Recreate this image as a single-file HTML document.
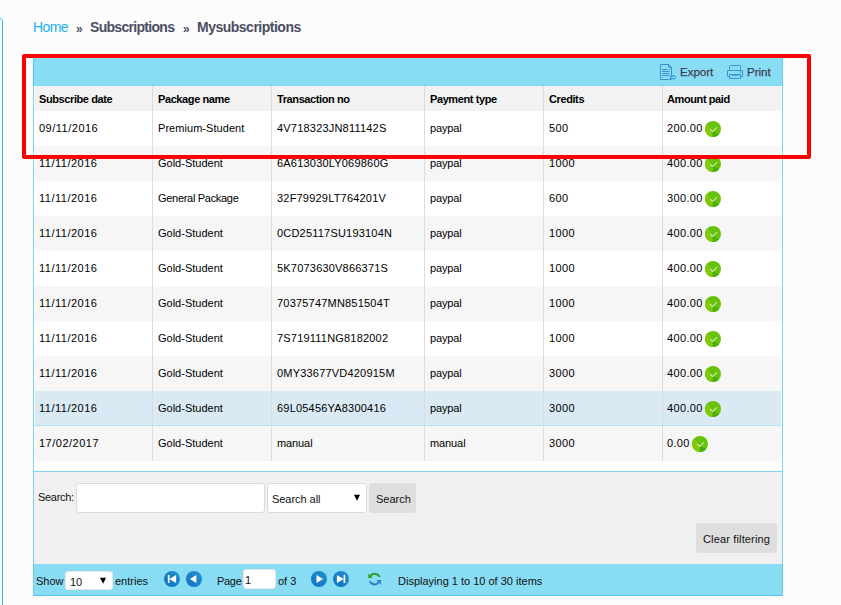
<!DOCTYPE html>
<html><head><meta charset="utf-8">
<style>
*{margin:0;padding:0;box-sizing:border-box}
html,body{width:841px;height:605px;overflow:hidden;background:#fcfcfc;font-family:"Liberation Sans",sans-serif;color:#222}
.a{position:absolute}
#side{left:-10px;top:17px;width:13px;height:620px;border:1px solid #26bdee;border-left:none;border-top-right-radius:5px}
.bc{position:absolute;top:19px;font-size:14px;white-space:nowrap;height:16px;line-height:16px;color:#4b4e63;font-weight:bold}
.cell{position:absolute;white-space:nowrap;overflow:visible}
.t{position:absolute;left:5px;top:-1px;bottom:1px;display:flex;align-items:center;font-size:11px;color:#000}
.hb{letter-spacing:-0.4px}
.hb{font-weight:bold}
.chk{margin-left:2px;margin-top:2px}
.lbl{position:absolute;font-size:11px;white-space:nowrap;line-height:14px;color:#111}
.inp{position:absolute;background:#fff;border:1px solid #dadada;border-radius:3px}
.btn{position:absolute;background:#dedede;border-radius:3px}
</style></head><body>
<div class="a" id="side"></div>
<div class="bc" style="left:33px;color:#1fb1ea;font-weight:normal;letter-spacing:-0.6px">Home</div>
<div class="bc" style="left:76px;top:21px;font-size:12px">»</div>
<div class="bc" style="left:90px;letter-spacing:-0.7px">Subscriptions</div>
<div class="bc" style="left:183px;top:21px;font-size:12px">»</div>
<div class="bc" style="left:197px;letter-spacing:-0.5px">Mysubscriptions</div>

<div class="a" style="left:33px;top:58px;width:750px;height:538px;border:1px solid #7fd4ef;border-top:none;background:#fff"></div>
<div class="a" style="left:33px;top:58px;width:750px;height:28px;background:#88dcf3;border-left:1px solid #52c6ee;border-right:1px solid #6ccfef;border-bottom:1px solid #80d8f1"></div>
<svg class="a" style="left:655px;top:60px" width="26" height="24" viewBox="0 0 26 24">
 <g fill="none" stroke="#3a92d0" stroke-width="1">
  <path d="M5.5 4.5 H13.5 L16.5 7.5 V19.5 H5.5 Z"/>
  <path d="M13.5 4.5 V6 A1.5 1.5 0 0 0 15 7.5 H16.5"/>
  <path d="M7 9.5 H12.5 M7 11.5 H14.5 M7 13.5 H14.5 M7 15.5 H14.5"/>
  <path d="M14 9.5 H15"/>
  <path d="M15.5 16.2 H18.2 V15 L21 17.3 L18.2 19.6 V18.4 H15.5 Z" fill="#88dcf3"/>
 </g>
</svg>
<div class="lbl" style="left:680px;top:65px;color:#3a3f55;font-size:11.5px;-webkit-text-stroke:0.25px #3a3f55">Export</div>
<svg class="a" style="left:723px;top:60px" width="26" height="24" viewBox="0 0 26 24">
 <g fill="none" stroke="#3a92d0" stroke-width="1">
  <path d="M6.5 9.5 V6.5 Q6.5 5.5 7.5 5.5 H16.5 Q17.5 5.5 17.5 6.5 V9.5"/>
  <path d="M6.5 16.5 H5 Q4.5 16.5 4.5 16 V11 Q4.5 10.5 5 10.5 H19 Q19.5 10.5 19.5 11 V16 Q19.5 16.5 19 16.5 H17.5"/>
  <path d="M6.5 14.5 V18 Q6.5 18.5 7 18.5 H17 Q17.5 18.5 17.5 18 V14.5"/>
  <path d="M6.5 14.5 H17.5"/>
  <path d="M8.5 15.2 H15.5"/>
 </g>
 <circle cx="17.3" cy="12" r=".8" fill="#3a92d0"/>
</svg>
<div class="lbl" style="left:747px;top:65px;color:#3a3f55;font-size:11.5px;-webkit-text-stroke:0.25px #3a3f55">Print</div>

<div class="a" style="left:35px;top:86px;width:746px;height:25px;background:#f2f2f2"></div>
<div class="cell" style="left:35px;top:86px;width:117px;height:25px;"><span class="t hb" style="left:4px;top:0;bottom:0">Subscribe date</span></div>
<div class="cell" style="left:152px;top:86px;width:119px;height:25px;border-left:1px solid #dcdcdc;"><span class="t hb" style="left:5px;top:0;bottom:0">Package name</span></div>
<div class="cell" style="left:271px;top:86px;width:153px;height:25px;border-left:1px solid #dcdcdc;"><span class="t hb" style="left:5px;top:0;bottom:0">Transaction no</span></div>
<div class="cell" style="left:424px;top:86px;width:119px;height:25px;border-left:1px solid #dcdcdc;"><span class="t hb" style="left:5px;top:0;bottom:0">Payment type</span></div>
<div class="cell" style="left:543px;top:86px;width:119px;height:25px;border-left:1px solid #dcdcdc;"><span class="t hb" style="left:5px;top:0;bottom:0">Credits</span></div>
<div class="cell" style="left:662px;top:86px;width:119px;height:25px;border-left:1px solid #dcdcdc;"><span class="t hb" style="left:4px;top:0;bottom:0">Amount paid</span></div>
<div class="a" style="left:35px;top:111px;width:746px;height:35px;background:#ffffff"></div>
<div class="cell" style="left:35px;top:111px;width:117px;height:35px;"><span class="t " style="left:4px;letter-spacing:0.5px">09/11/2016</span></div>
<div class="cell" style="left:152px;top:111px;width:119px;height:35px;border-left:1px solid #dcdcdc;"><span class="t " style="left:5px;letter-spacing:0.05px">Premium-Student</span></div>
<div class="cell" style="left:271px;top:111px;width:153px;height:35px;border-left:1px solid #dcdcdc;"><span class="t " style="left:5px;letter-spacing:0.2px">4V718323JN811142S</span></div>
<div class="cell" style="left:424px;top:111px;width:119px;height:35px;border-left:1px solid #dcdcdc;"><span class="t " style="left:5px;letter-spacing:-0.15px">paypal</span></div>
<div class="cell" style="left:543px;top:111px;width:119px;height:35px;border-left:1px solid #dcdcdc;"><span class="t " style="left:5px;letter-spacing:0.4px">500</span></div>
<div class="cell" style="left:662px;top:111px;width:119px;height:35px;border-left:1px solid #dcdcdc;"><span class="t " style="left:4px;letter-spacing:0.35px">200.00<svg class="chk" width="16" height="16" viewBox="0 0 16 16"><defs><clipPath id="cc0"><circle cx="8" cy="8" r="8"/></clipPath></defs><g clip-path="url(#cc0)"><rect width="16" height="16" fill="#67c20b"/><path d="M7.6 10 L-2.6 -4.4 L-5 -4.4 L-5 20 L7.85 20 Z" fill="#82c90c"/><path d="M7.6 10 L7.85 20 L20 20 L20 16 Z" fill="#46b00c"/></g><path d="M5.2 8.2 L7.6 10.4 L12.2 6.2" fill="none" stroke="#fff" stroke-width="1.1" opacity=".65"/></svg></span></div>
<div class="a" style="left:35px;top:146px;width:746px;height:35px;background:#f6f6f6"></div>
<div class="cell" style="left:35px;top:146px;width:117px;height:35px;"><span class="t " style="left:4px;letter-spacing:0.5px">11/11/2016</span></div>
<div class="cell" style="left:152px;top:146px;width:119px;height:35px;border-left:1px solid #dcdcdc;"><span class="t " style="left:5px;letter-spacing:0px">Gold-Student</span></div>
<div class="cell" style="left:271px;top:146px;width:153px;height:35px;border-left:1px solid #dcdcdc;"><span class="t " style="left:5px;letter-spacing:0.2px">6A613030LY069860G</span></div>
<div class="cell" style="left:424px;top:146px;width:119px;height:35px;border-left:1px solid #dcdcdc;"><span class="t " style="left:5px;letter-spacing:-0.15px">paypal</span></div>
<div class="cell" style="left:543px;top:146px;width:119px;height:35px;border-left:1px solid #dcdcdc;"><span class="t " style="left:5px;letter-spacing:0.4px">1000</span></div>
<div class="cell" style="left:662px;top:146px;width:119px;height:35px;border-left:1px solid #dcdcdc;"><span class="t " style="left:4px;letter-spacing:0.35px">400.00<svg class="chk" width="16" height="16" viewBox="0 0 16 16"><defs><clipPath id="cc1"><circle cx="8" cy="8" r="8"/></clipPath></defs><g clip-path="url(#cc1)"><rect width="16" height="16" fill="#67c20b"/><path d="M7.6 10 L-2.6 -4.4 L-5 -4.4 L-5 20 L7.85 20 Z" fill="#82c90c"/><path d="M7.6 10 L7.85 20 L20 20 L20 16 Z" fill="#46b00c"/></g><path d="M5.2 8.2 L7.6 10.4 L12.2 6.2" fill="none" stroke="#fff" stroke-width="1.1" opacity=".65"/></svg></span></div>
<div class="a" style="left:35px;top:181px;width:746px;height:35px;background:#ffffff"></div>
<div class="cell" style="left:35px;top:181px;width:117px;height:35px;"><span class="t " style="left:4px;letter-spacing:0.5px">11/11/2016</span></div>
<div class="cell" style="left:152px;top:181px;width:119px;height:35px;border-left:1px solid #dcdcdc;"><span class="t " style="left:5px;letter-spacing:-0.3px">General Package</span></div>
<div class="cell" style="left:271px;top:181px;width:153px;height:35px;border-left:1px solid #dcdcdc;"><span class="t " style="left:5px;letter-spacing:0.2px">32F79929LT764201V</span></div>
<div class="cell" style="left:424px;top:181px;width:119px;height:35px;border-left:1px solid #dcdcdc;"><span class="t " style="left:5px;letter-spacing:-0.15px">paypal</span></div>
<div class="cell" style="left:543px;top:181px;width:119px;height:35px;border-left:1px solid #dcdcdc;"><span class="t " style="left:5px;letter-spacing:0.4px">600</span></div>
<div class="cell" style="left:662px;top:181px;width:119px;height:35px;border-left:1px solid #dcdcdc;"><span class="t " style="left:4px;letter-spacing:0.35px">300.00<svg class="chk" width="16" height="16" viewBox="0 0 16 16"><defs><clipPath id="cc2"><circle cx="8" cy="8" r="8"/></clipPath></defs><g clip-path="url(#cc2)"><rect width="16" height="16" fill="#67c20b"/><path d="M7.6 10 L-2.6 -4.4 L-5 -4.4 L-5 20 L7.85 20 Z" fill="#82c90c"/><path d="M7.6 10 L7.85 20 L20 20 L20 16 Z" fill="#46b00c"/></g><path d="M5.2 8.2 L7.6 10.4 L12.2 6.2" fill="none" stroke="#fff" stroke-width="1.1" opacity=".65"/></svg></span></div>
<div class="a" style="left:35px;top:216px;width:746px;height:35px;background:#f6f6f6"></div>
<div class="cell" style="left:35px;top:216px;width:117px;height:35px;"><span class="t " style="left:4px;letter-spacing:0.5px">11/11/2016</span></div>
<div class="cell" style="left:152px;top:216px;width:119px;height:35px;border-left:1px solid #dcdcdc;"><span class="t " style="left:5px;letter-spacing:0px">Gold-Student</span></div>
<div class="cell" style="left:271px;top:216px;width:153px;height:35px;border-left:1px solid #dcdcdc;"><span class="t " style="left:5px;letter-spacing:0.2px">0CD25117SU193104N</span></div>
<div class="cell" style="left:424px;top:216px;width:119px;height:35px;border-left:1px solid #dcdcdc;"><span class="t " style="left:5px;letter-spacing:-0.15px">paypal</span></div>
<div class="cell" style="left:543px;top:216px;width:119px;height:35px;border-left:1px solid #dcdcdc;"><span class="t " style="left:5px;letter-spacing:0.4px">1000</span></div>
<div class="cell" style="left:662px;top:216px;width:119px;height:35px;border-left:1px solid #dcdcdc;"><span class="t " style="left:4px;letter-spacing:0.35px">400.00<svg class="chk" width="16" height="16" viewBox="0 0 16 16"><defs><clipPath id="cc3"><circle cx="8" cy="8" r="8"/></clipPath></defs><g clip-path="url(#cc3)"><rect width="16" height="16" fill="#67c20b"/><path d="M7.6 10 L-2.6 -4.4 L-5 -4.4 L-5 20 L7.85 20 Z" fill="#82c90c"/><path d="M7.6 10 L7.85 20 L20 20 L20 16 Z" fill="#46b00c"/></g><path d="M5.2 8.2 L7.6 10.4 L12.2 6.2" fill="none" stroke="#fff" stroke-width="1.1" opacity=".65"/></svg></span></div>
<div class="a" style="left:35px;top:251px;width:746px;height:35px;background:#ffffff"></div>
<div class="cell" style="left:35px;top:251px;width:117px;height:35px;"><span class="t " style="left:4px;letter-spacing:0.5px">11/11/2016</span></div>
<div class="cell" style="left:152px;top:251px;width:119px;height:35px;border-left:1px solid #dcdcdc;"><span class="t " style="left:5px;letter-spacing:0px">Gold-Student</span></div>
<div class="cell" style="left:271px;top:251px;width:153px;height:35px;border-left:1px solid #dcdcdc;"><span class="t " style="left:5px;letter-spacing:0.2px">5K7073630V866371S</span></div>
<div class="cell" style="left:424px;top:251px;width:119px;height:35px;border-left:1px solid #dcdcdc;"><span class="t " style="left:5px;letter-spacing:-0.15px">paypal</span></div>
<div class="cell" style="left:543px;top:251px;width:119px;height:35px;border-left:1px solid #dcdcdc;"><span class="t " style="left:5px;letter-spacing:0.4px">1000</span></div>
<div class="cell" style="left:662px;top:251px;width:119px;height:35px;border-left:1px solid #dcdcdc;"><span class="t " style="left:4px;letter-spacing:0.35px">400.00<svg class="chk" width="16" height="16" viewBox="0 0 16 16"><defs><clipPath id="cc4"><circle cx="8" cy="8" r="8"/></clipPath></defs><g clip-path="url(#cc4)"><rect width="16" height="16" fill="#67c20b"/><path d="M7.6 10 L-2.6 -4.4 L-5 -4.4 L-5 20 L7.85 20 Z" fill="#82c90c"/><path d="M7.6 10 L7.85 20 L20 20 L20 16 Z" fill="#46b00c"/></g><path d="M5.2 8.2 L7.6 10.4 L12.2 6.2" fill="none" stroke="#fff" stroke-width="1.1" opacity=".65"/></svg></span></div>
<div class="a" style="left:35px;top:286px;width:746px;height:35px;background:#f6f6f6"></div>
<div class="cell" style="left:35px;top:286px;width:117px;height:35px;"><span class="t " style="left:4px;letter-spacing:0.5px">11/11/2016</span></div>
<div class="cell" style="left:152px;top:286px;width:119px;height:35px;border-left:1px solid #dcdcdc;"><span class="t " style="left:5px;letter-spacing:0px">Gold-Student</span></div>
<div class="cell" style="left:271px;top:286px;width:153px;height:35px;border-left:1px solid #dcdcdc;"><span class="t " style="left:5px;letter-spacing:0.2px">70375747MN851504T</span></div>
<div class="cell" style="left:424px;top:286px;width:119px;height:35px;border-left:1px solid #dcdcdc;"><span class="t " style="left:5px;letter-spacing:-0.15px">paypal</span></div>
<div class="cell" style="left:543px;top:286px;width:119px;height:35px;border-left:1px solid #dcdcdc;"><span class="t " style="left:5px;letter-spacing:0.4px">1000</span></div>
<div class="cell" style="left:662px;top:286px;width:119px;height:35px;border-left:1px solid #dcdcdc;"><span class="t " style="left:4px;letter-spacing:0.35px">400.00<svg class="chk" width="16" height="16" viewBox="0 0 16 16"><defs><clipPath id="cc5"><circle cx="8" cy="8" r="8"/></clipPath></defs><g clip-path="url(#cc5)"><rect width="16" height="16" fill="#67c20b"/><path d="M7.6 10 L-2.6 -4.4 L-5 -4.4 L-5 20 L7.85 20 Z" fill="#82c90c"/><path d="M7.6 10 L7.85 20 L20 20 L20 16 Z" fill="#46b00c"/></g><path d="M5.2 8.2 L7.6 10.4 L12.2 6.2" fill="none" stroke="#fff" stroke-width="1.1" opacity=".65"/></svg></span></div>
<div class="a" style="left:35px;top:321px;width:746px;height:35px;background:#ffffff"></div>
<div class="cell" style="left:35px;top:321px;width:117px;height:35px;"><span class="t " style="left:4px;letter-spacing:0.5px">11/11/2016</span></div>
<div class="cell" style="left:152px;top:321px;width:119px;height:35px;border-left:1px solid #dcdcdc;"><span class="t " style="left:5px;letter-spacing:0px">Gold-Student</span></div>
<div class="cell" style="left:271px;top:321px;width:153px;height:35px;border-left:1px solid #dcdcdc;"><span class="t " style="left:5px;letter-spacing:0.2px">7S719111NG8182002</span></div>
<div class="cell" style="left:424px;top:321px;width:119px;height:35px;border-left:1px solid #dcdcdc;"><span class="t " style="left:5px;letter-spacing:-0.15px">paypal</span></div>
<div class="cell" style="left:543px;top:321px;width:119px;height:35px;border-left:1px solid #dcdcdc;"><span class="t " style="left:5px;letter-spacing:0.4px">1000</span></div>
<div class="cell" style="left:662px;top:321px;width:119px;height:35px;border-left:1px solid #dcdcdc;"><span class="t " style="left:4px;letter-spacing:0.35px">400.00<svg class="chk" width="16" height="16" viewBox="0 0 16 16"><defs><clipPath id="cc6"><circle cx="8" cy="8" r="8"/></clipPath></defs><g clip-path="url(#cc6)"><rect width="16" height="16" fill="#67c20b"/><path d="M7.6 10 L-2.6 -4.4 L-5 -4.4 L-5 20 L7.85 20 Z" fill="#82c90c"/><path d="M7.6 10 L7.85 20 L20 20 L20 16 Z" fill="#46b00c"/></g><path d="M5.2 8.2 L7.6 10.4 L12.2 6.2" fill="none" stroke="#fff" stroke-width="1.1" opacity=".65"/></svg></span></div>
<div class="a" style="left:35px;top:356px;width:746px;height:35px;background:#f6f6f6"></div>
<div class="cell" style="left:35px;top:356px;width:117px;height:35px;"><span class="t " style="left:4px;letter-spacing:0.5px">11/11/2016</span></div>
<div class="cell" style="left:152px;top:356px;width:119px;height:35px;border-left:1px solid #dcdcdc;"><span class="t " style="left:5px;letter-spacing:0px">Gold-Student</span></div>
<div class="cell" style="left:271px;top:356px;width:153px;height:35px;border-left:1px solid #dcdcdc;"><span class="t " style="left:5px;letter-spacing:0.2px">0MY33677VD420915M</span></div>
<div class="cell" style="left:424px;top:356px;width:119px;height:35px;border-left:1px solid #dcdcdc;"><span class="t " style="left:5px;letter-spacing:-0.15px">paypal</span></div>
<div class="cell" style="left:543px;top:356px;width:119px;height:35px;border-left:1px solid #dcdcdc;"><span class="t " style="left:5px;letter-spacing:0.4px">3000</span></div>
<div class="cell" style="left:662px;top:356px;width:119px;height:35px;border-left:1px solid #dcdcdc;"><span class="t " style="left:4px;letter-spacing:0.35px">400.00<svg class="chk" width="16" height="16" viewBox="0 0 16 16"><defs><clipPath id="cc7"><circle cx="8" cy="8" r="8"/></clipPath></defs><g clip-path="url(#cc7)"><rect width="16" height="16" fill="#67c20b"/><path d="M7.6 10 L-2.6 -4.4 L-5 -4.4 L-5 20 L7.85 20 Z" fill="#82c90c"/><path d="M7.6 10 L7.85 20 L20 20 L20 16 Z" fill="#46b00c"/></g><path d="M5.2 8.2 L7.6 10.4 L12.2 6.2" fill="none" stroke="#fff" stroke-width="1.1" opacity=".65"/></svg></span></div>
<div class="a" style="left:35px;top:391px;width:746px;height:35px;background:#d9eaf4"></div>
<div class="a" style="left:35px;top:425px;width:746px;height:1px;background:repeating-linear-gradient(90deg,#8ed5ef 0 1px,transparent 1px 2px)"></div>
<div class="cell" style="left:35px;top:391px;width:117px;height:35px;"><span class="t " style="left:4px;letter-spacing:0.5px">11/11/2016</span></div>
<div class="cell" style="left:152px;top:391px;width:119px;height:35px;border-left:1px solid #dcdcdc;"><span class="t " style="left:5px;letter-spacing:0px">Gold-Student</span></div>
<div class="cell" style="left:271px;top:391px;width:153px;height:35px;border-left:1px solid #dcdcdc;"><span class="t " style="left:5px;letter-spacing:0.2px">69L05456YA8300416</span></div>
<div class="cell" style="left:424px;top:391px;width:119px;height:35px;border-left:1px solid #dcdcdc;"><span class="t " style="left:5px;letter-spacing:-0.15px">paypal</span></div>
<div class="cell" style="left:543px;top:391px;width:119px;height:35px;border-left:1px solid #dcdcdc;"><span class="t " style="left:5px;letter-spacing:0.4px">3000</span></div>
<div class="cell" style="left:662px;top:391px;width:119px;height:35px;border-left:1px solid #dcdcdc;"><span class="t " style="left:4px;letter-spacing:0.35px">400.00<svg class="chk" width="16" height="16" viewBox="0 0 16 16"><defs><clipPath id="cc8"><circle cx="8" cy="8" r="8"/></clipPath></defs><g clip-path="url(#cc8)"><rect width="16" height="16" fill="#67c20b"/><path d="M7.6 10 L-2.6 -4.4 L-5 -4.4 L-5 20 L7.85 20 Z" fill="#82c90c"/><path d="M7.6 10 L7.85 20 L20 20 L20 16 Z" fill="#46b00c"/></g><path d="M5.2 8.2 L7.6 10.4 L12.2 6.2" fill="none" stroke="#fff" stroke-width="1.1" opacity=".65"/></svg></span></div>
<div class="a" style="left:35px;top:426px;width:746px;height:35px;background:#f6f6f6"></div>
<div class="cell" style="left:35px;top:426px;width:117px;height:35px;"><span class="t " style="left:4px;letter-spacing:0.5px">17/02/2017</span></div>
<div class="cell" style="left:152px;top:426px;width:119px;height:35px;border-left:1px solid #dcdcdc;"><span class="t " style="left:5px;letter-spacing:0px">Gold-Student</span></div>
<div class="cell" style="left:271px;top:426px;width:153px;height:35px;border-left:1px solid #dcdcdc;"><span class="t " style="left:5px;letter-spacing:-0.1px">manual</span></div>
<div class="cell" style="left:424px;top:426px;width:119px;height:35px;border-left:1px solid #dcdcdc;"><span class="t " style="left:5px;letter-spacing:-0.1px">manual</span></div>
<div class="cell" style="left:543px;top:426px;width:119px;height:35px;border-left:1px solid #dcdcdc;"><span class="t " style="left:5px;letter-spacing:0.4px">3000</span></div>
<div class="cell" style="left:662px;top:426px;width:119px;height:35px;border-left:1px solid #dcdcdc;"><span class="t " style="left:4px;letter-spacing:0.35px">0.00<svg class="chk" width="16" height="16" viewBox="0 0 16 16"><defs><clipPath id="cc9"><circle cx="8" cy="8" r="8"/></clipPath></defs><g clip-path="url(#cc9)"><rect width="16" height="16" fill="#67c20b"/><path d="M7.6 10 L-2.6 -4.4 L-5 -4.4 L-5 20 L7.85 20 Z" fill="#82c90c"/><path d="M7.6 10 L7.85 20 L20 20 L20 16 Z" fill="#46b00c"/></g><path d="M5.2 8.2 L7.6 10.4 L12.2 6.2" fill="none" stroke="#fff" stroke-width="1.1" opacity=".65"/></svg></span></div>
<div class="a" style="left:34px;top:471px;width:748px;height:93px;background:#f0f0f0;border-top:1px solid #7fd4ef"></div>
<div class="lbl" style="left:38px;top:490px;letter-spacing:-0.3px">Search:</div>
<div class="inp" style="left:76px;top:483px;width:189px;height:30px"></div>
<div class="inp" style="left:267px;top:483px;width:100px;height:30px"></div>
<div class="lbl" style="left:272px;top:492px;letter-spacing:-0.05px">Search all</div>
<svg class="a" style="left:350px;top:490px" width="14" height="14" viewBox="0 0 14 14"><path d="M3.9 4.8 H10 L7.1 10.8 Z" fill="#000"/></svg>
<div class="btn" style="left:369px;top:483px;width:47px;height:30px"></div>
<div class="lbl" style="left:376px;top:492px">Search</div>
<div class="btn" style="left:696px;top:523px;width:81px;height:30px"></div>
<div class="lbl" style="left:703px;top:532px;letter-spacing:0.15px">Clear filtering</div>

<div class="a" style="left:33px;top:564px;width:750px;height:32px;background:#88dcf3;border:1px solid #6fcdec;border-bottom-color:#58c7f0;border-top:none"></div>
<div class="lbl" style="left:36px;top:574px">Show</div>
<div class="inp" style="left:65px;top:571px;width:48px;height:19px;border-color:#e6e6e6"></div>
<div class="lbl" style="left:70px;top:575px">10</div>
<svg class="a" style="left:96px;top:573px" width="14" height="14" viewBox="0 0 14 14"><path d="M4 4.8 H10 L7.1 10.8 Z" fill="#000"/></svg>
<div class="lbl" style="left:115px;top:574px">entries</div>
<svg width="0" height="0" style="position:absolute"><defs><linearGradient id="pg" x1="1" y1="0" x2="0" y2="1"><stop offset="0" stop-color="#2592d2"/><stop offset="1" stop-color="#0e72be"/></linearGradient></defs></svg>
<svg class="a" style="left:164px;top:571px" width="16" height="16" viewBox="0 0 16 16"><circle cx="8" cy="8" r="8" fill="url(#pg)"/><path d="M3.9 4 H5.5 V12 H3.9 Z M5.5 8 L12.1 4 V12 Z" fill="#fff"/></svg>
<svg class="a" style="left:186px;top:571px" width="16" height="16" viewBox="0 0 16 16"><circle cx="8" cy="8" r="8" fill="url(#pg)"/><path d="M3.8 8 L10.4 4 V12 Z" fill="#fff"/></svg>
<div class="lbl" style="left:217px;top:574px;letter-spacing:-0.3px">Page</div>
<div class="inp" style="left:243px;top:569px;width:33px;height:20px;border-color:#e6e6e6"></div>
<div class="lbl" style="left:245px;top:573px">1</div>
<div class="lbl" style="left:278px;top:574px">of 3</div>
<svg class="a" style="left:311px;top:571px" width="16" height="16" viewBox="0 0 16 16"><circle cx="8" cy="8" r="8" fill="url(#pg)"/><path d="M12.1 8 L5.5 4 V12 Z" fill="#fff"/></svg>
<svg class="a" style="left:333px;top:571px" width="16" height="16" viewBox="0 0 16 16"><circle cx="8" cy="8" r="8" fill="url(#pg)"/><path d="M10.6 4 H12.2 V12 H10.6 Z M10.6 8 L3.9 4 V12 Z" fill="#fff"/></svg>
<svg class="a" style="left:364px;top:569px" width="22" height="20" viewBox="0 0 22 20">
 <g id="rg"><path d="M5.85 6.11 A6.2 6.2 0 0 1 16.6 8.1 L14.12 7.63 A4.3 4.3 0 0 0 7.31 7.34 Z" fill="#2f9d1f"/><path d="M4.5 4.6 L4.2 9.1 L8.9 9.0 Z" fill="#2f9d1f"/></g>
 <g transform="rotate(180 10.65 10.1)"><path d="M5.85 6.11 A6.2 6.2 0 0 1 16.6 8.1 L14.12 7.63 A4.3 4.3 0 0 0 7.31 7.34 Z" fill="#2b7ac8"/><path d="M4.5 4.6 L4.2 9.1 L8.9 9.0 Z" fill="#2b7ac8"/></g>
</svg>
<div class="lbl" style="left:398px;top:574px">Displaying 1 to 10 of 30 items</div>

<div class="a" style="left:22px;top:54px;width:789px;height:105px;border:4px solid #ff0000;border-radius:2px"></div>
</body></html>
